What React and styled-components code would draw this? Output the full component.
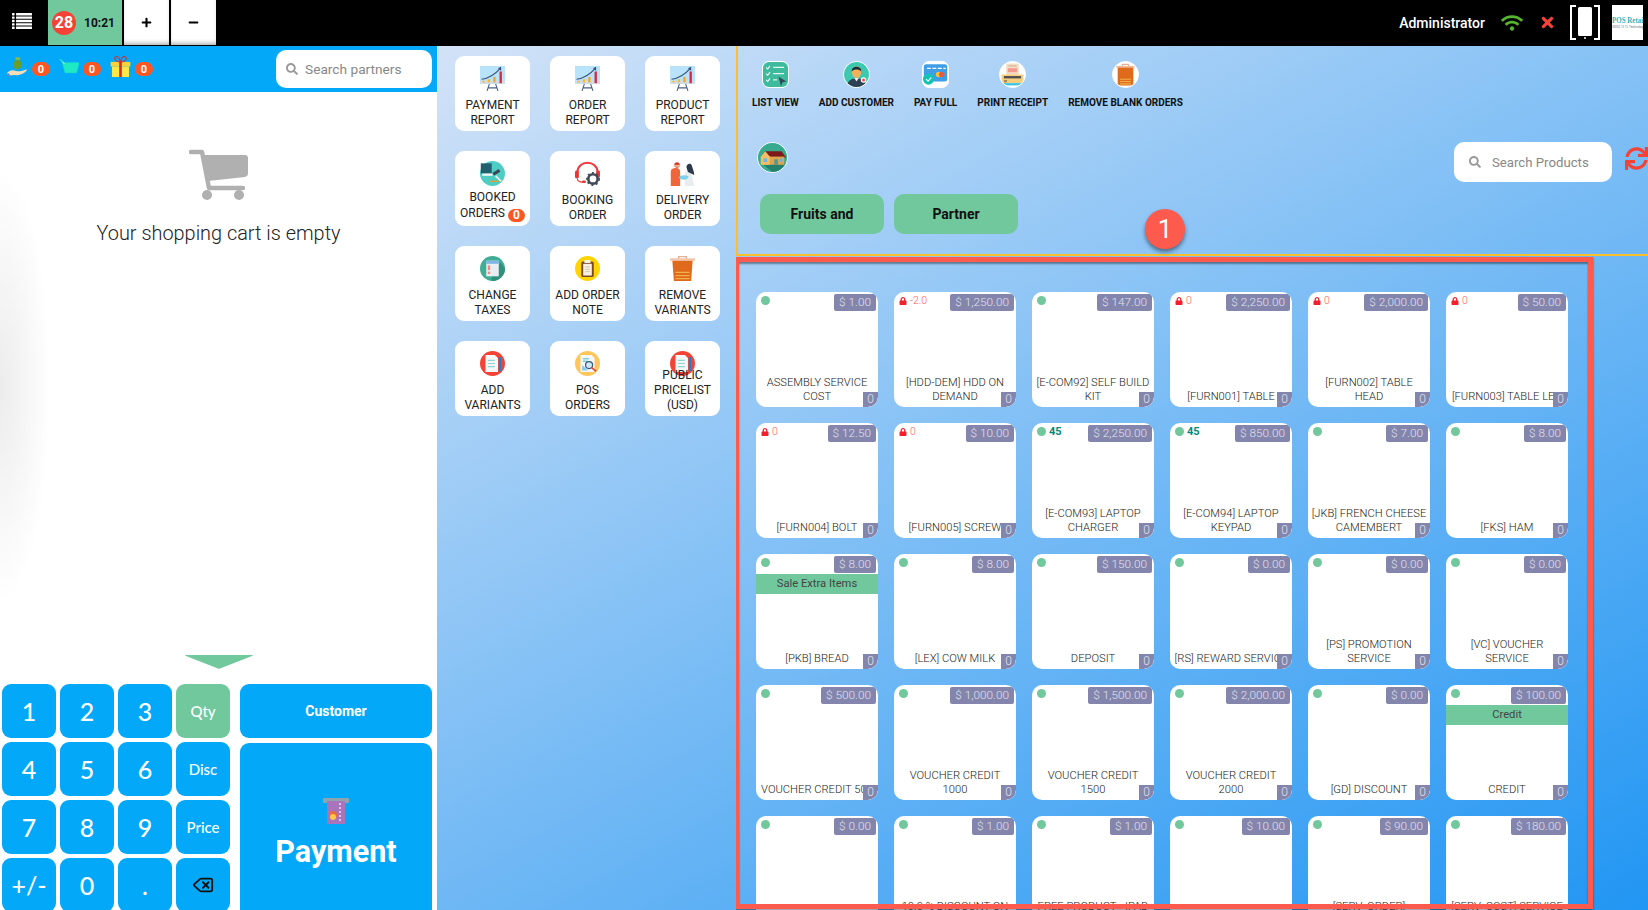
import React from "react";
import styled, { createGlobalStyle } from "styled-components";
import { FaWifi, FaTimes, FaSearch, FaSync, FaLock, FaPlus, FaMinus } from "react-icons/fa";
import { Delete } from "lucide-react";

const GlobalStyle = createGlobalStyle`
  html, body {
    margin: 0;
    padding: 0;
    height: 100%;
    overflow: hidden;
    font-family: Roboto, "Liberation Sans", sans-serif;
  }
  * { box-sizing: border-box; }
`;

// small drawings used around the page
const MenuIcon = () => (
  <svg viewBox="0 0 20 16" width="20" height="16" fill="#fff">
    {[0, 3.4, 6.8, 10.2, 13.6].map((y) => (
      <g key={y}>
        <rect x="0" y={y} width="2.6" height="2.4" rx="0.6" />
        <rect x="4" y={y} width="16" height="2.4" rx="0.4" />
      </g>
    ))}
  </svg>
);

const ChartIcon = () => (
  <svg viewBox="0 0 32 32" width="25" height="25">
    <rect x="0" y="0" width="32" height="23" fill="#b9e3fb" />
    <rect x="0" y="19" width="32" height="4" fill="#cfdde8" />
    <rect x="3" y="19" width="3" height="2" fill="#f5b82e" />
    <rect x="10" y="17" width="3" height="4" fill="#f5b82e" />
    <rect x="17" y="14" width="3" height="7" fill="#f5a623" />
    <rect x="25" y="7" width="3" height="15" fill="#d8283c" />
    <path d="M2 17 C10 16 18 12 26 3" fill="none" stroke="#34517a" strokeWidth="1.4" />
    <path d="M23 3 L27 1 L27 6 Z" fill="#34517a" />
    <path d="M12 23 L9 32 M20 23 L23 32 M10 28 H22" stroke="#4a5f80" strokeWidth="1.3" fill="none" />
  </svg>
);

const BookedIcon = () => (
  <svg viewBox="0 0 32 32" width="25" height="25">
    <circle cx="16" cy="16" r="16" fill="#4ecdc4" />
    <rect x="1" y="3" width="14" height="13" fill="#1f5f6e" />
    <rect x="3" y="16" width="13" height="3" fill="#f4f4f4" />
    <path d="M17 17 L25 12" stroke="#3a4654" strokeWidth="4" />
    <path d="M20 19 L27 26" stroke="#f4f4f4" strokeWidth="2" />
    <rect x="12" y="25" width="12" height="2" fill="#c9a94c" />
  </svg>
);

const HeadsetIcon = () => (
  <svg viewBox="0 0 32 32" width="25" height="25">
    <path d="M3 15 C3 -2 29 -2 29 15" fill="none" stroke="#f0393c" strokeWidth="2.6" />
    <rect x="0" y="12" width="5" height="10" rx="2" fill="#e53935" />
    <rect x="27" y="12" width="5" height="9" rx="2" fill="#e53935" />
    <path d="M3 22 C3 26 6 27 10 27" fill="none" stroke="#f0393c" strokeWidth="1.5" />
    <rect x="9" y="25" width="5" height="3" rx="1.5" fill="#e53935" />
    <circle cx="23" cy="23" r="6" fill="none" stroke="#3f4a57" strokeWidth="3.4" />
    <circle cx="23" cy="23" r="8" fill="none" stroke="#3f4a57" strokeWidth="1.8" strokeDasharray="2.5 3.4" />
  </svg>
);

const DeliveryIcon = () => (
  <svg viewBox="0 0 32 32" width="25" height="25">
    <path d="M1 32 V14 C1 10 4 9 8 9 C11 9 13 11 13 14 V32 Z" fill="#f0653a" />
    <circle cx="9" cy="5" r="3.5" fill="#d8362b" />
    <rect x="5" y="5" width="8" height="2.5" fill="#f2b48a" />
    <path d="M19 32 V16 C19 11 24 11 27 13 L31 32 Z" fill="#e9edf0" />
    <path d="M21 8 C21 3 27 2 28 6 C29 10 31 13 31 18 L27 16 L23 14 Z" fill="#2d3a4a" />
    <path d="M11 21 C13 18 20 17 24 20 C22 25 15 25 11 21 Z" fill="#7fd0e8" />
  </svg>
);

const TaxIcon = () => (
  <svg viewBox="0 0 32 32" width="25" height="25">
    <circle cx="16" cy="16" r="16" fill="#3fae95" />
    <path d="M14 30 L26 8 L32 16 A16 16 0 0 1 16 32 Z" fill="#2f917b" />
    <rect x="8" y="6" width="16" height="20" fill="#e8eef2" />
    <rect x="8" y="6" width="16" height="4" fill="#7fb6e6" />
    <rect x="10" y="12" width="3" height="6" fill="#f08a80" />
    <rect x="10" y="20" width="3" height="3" fill="#f08a80" />
  </svg>
);

const NoteIcon = () => (
  <svg viewBox="0 0 32 32" width="25" height="25">
    <circle cx="16" cy="16" r="16" fill="#ffd400" />
    <rect x="8" y="7" width="16" height="20" rx="2" fill="#7a4a22" />
    <rect x="10.5" y="10" width="11" height="15" fill="#f7f1e3" />
    <rect x="12" y="5" width="8" height="4" rx="1" fill="#f7f1e3" />
    <path d="M13 14 H19 M13 17 H19 M13 20 H19" stroke="#c9b89c" strokeWidth="1" />
  </svg>
);

const TrashIcon = () => (
  <svg viewBox="0 0 32 32" width="25" height="25">
    <rect x="0" y="3" width="32" height="3" fill="#f3c3a6" />
    <path d="M11 3 V1 H21 V3" fill="none" stroke="#d99b77" strokeWidth="1.5" />
    <path d="M3 6 H29 L27 32 H5 Z" fill="#e06a1c" />
    <path d="M7 21 H25 M7 25 H25 M7 29 H25" stroke="#f2b04a" strokeWidth="1.6" />
  </svg>
);

const VariantIcon = () => (
  <svg viewBox="0 0 32 32" width="25" height="25">
    <circle cx="16" cy="16" r="16" fill="#f44336" />
    <path d="M7 5 H19 L23 9 V27 H7 Z" fill="#f4f6f8" />
    <path d="M10 12 H19 M10 16 H19 M10 20 H19" stroke="#8fd6cf" strokeWidth="1.5" />
    <rect x="24" y="8" width="3" height="18" fill="#1f7fc4" />
  </svg>
);

const PosOrdersIcon = () => (
  <svg viewBox="0 0 32 32" width="25" height="25">
    <circle cx="16" cy="16" r="16" fill="#ffc65c" />
    <path d="M7 5 H21 L25 9 V27 H7 Z" fill="#f4f8fa" />
    <path d="M10 10 H18 M10 13 H16" stroke="#7fd0cf" strokeWidth="2" />
    <path d="M9 25 L9 18 L17 25 Z" fill="#8cc8ee" />
    <circle cx="18" cy="18" r="4.5" fill="#cfe8f7" stroke="#35567a" strokeWidth="1.5" />
    <path d="M21 21 L27 26" stroke="#e5483c" strokeWidth="2.2" />
  </svg>
);

const ListViewIcon = () => (
  <svg viewBox="0 0 32 32" width="100%" height="100%">
    <rect width="32" height="32" fill="#3dbb9c" />
    <path d="M4 7 L6 9 L9 5 M4 15 L6 17 L9 13 M4 23 L6 25 L9 21" fill="none" stroke="#fff" strokeWidth="1.3" />
    <path d="M13 7 H27 M13 15 H27 M13 23 H18" stroke="#e4f5f0" strokeWidth="1.6" />
    <path d="M20 19 L30 25 L25 26 L23 31 Z" fill="#37475a" />
  </svg>
);

const CustomerIcon = () => (
  <svg viewBox="0 0 32 32" width="100%" height="100%">
    <rect width="32" height="32" fill="#3dc9b0" />
    <path d="M4 32 C4 23 10 21 16 21 C22 21 28 23 28 32 Z" fill="#2e4054" />
    <path d="M13 20 H19 L16 25 Z" fill="#f4f4f4" />
    <ellipse cx="16" cy="13" rx="6" ry="7.5" fill="#f2b25c" />
    <path d="M10 12 C9 4 23 4 22 12 C19 9 13 9 10 12 Z" fill="#1d2b3a" />
    <circle cx="25" cy="23" r="3.5" fill="#fff" />
    <circle cx="25" cy="23" r="2" fill="#f0544f" />
  </svg>
);

const PayFullIcon = () => (
  <svg viewBox="0 0 32 32" width="100%" height="100%">
    <rect width="32" height="32" fill="#fff" />
    <rect x="1" y="3" width="30" height="22" rx="3" fill="#3f9fe6" />
    <path d="M5 8 H10 M12 8 H17 M19 8 H24 M26 8 H29" stroke="#fff" strokeWidth="1.6" />
    <circle cx="20" cy="16" r="3.5" fill="#f5c23c" />
    <circle cx="24" cy="16" r="3.5" fill="#ea5a3c" />
    <circle cx="7" cy="22" r="7" fill="#10c4b4" />
    <path d="M4 22 L6.5 24.5 L10.5 20" fill="none" stroke="#fff" strokeWidth="1.5" />
  </svg>
);

const ReceiptIcon = () => (
  <svg viewBox="0 0 32 32" width="100%" height="100%">
    <rect width="32" height="32" fill="#fff" />
    <rect x="8" y="2" width="16" height="15" fill="#f4dcc4" />
    <path d="M11 5 H21" stroke="#c9ad92" strokeWidth="1.2" />
    <rect x="10" y="8" width="12" height="5" fill="#f39a8c" />
    <path d="M2 16 H30 V27 H2 Z" fill="#f7cf7c" />
    <rect x="5" y="18" width="22" height="3" fill="#4d4f55" />
    <rect x="5" y="23" width="4" height="3" fill="#a98a58" />
    <rect x="5" y="27" width="22" height="3" fill="#3fc4e6" />
  </svg>
);

const RemoveIcon = () => (
  <svg viewBox="0 0 32 32" width="100%" height="100%">
    <rect width="32" height="32" fill="#fff" />
    <rect x="4" y="5" width="24" height="2" fill="#f3b795" />
    <path d="M12 5 V3 H20 V5" fill="none" stroke="#d99b77" strokeWidth="1.2" />
    <path d="M6 7 H26 V30 H6 Z" fill="#e06a1c" />
    <path d="M9 22 H23 M9 25 H23 M9 28 H23" stroke="#f2b04a" strokeWidth="1.3" />
  </svg>
);

const HomeIcon = () => (
  <svg viewBox="0 0 32 32" width="29" height="29">
    <circle cx="16" cy="16" r="16" fill="#38ab8f" />
    <path d="M6 24 L16 32 A16 16 0 0 0 30 23 L26 22 Z" fill="#26806e" />
    <path d="M3 15 L8 9 L26 9 L31 16 Z" fill="#7d1a1a" />
    <rect x="4" y="15" width="25" height="9" fill="#dfa54c" />
    <path d="M3 15 L8 9 L13 15 V24 H3 Z" fill="#f2bf68" />
    <rect x="6" y="17" width="4" height="4" fill="#6db6e8" />
    <rect x="18" y="18" width="4" height="6" fill="#4d9b94" />
    <rect x="24" y="17" width="3" height="4" fill="#6db6e8" />
  </svg>
);

const MoneyIcon = () => (
  <svg viewBox="0 0 32 32" width="21" height="21">
    <path d="M15 6 C7 9 8 20 15 20 C24 20 25 9 18 6 Z" fill="#6a9e2a" />
    <rect x="13" y="2" width="7" height="4" fill="#8cbc3c" />
    <path d="M0 26 C6 20 10 22 14 23 C20 24 24 22 31 20 C28 26 20 30 10 29 L2 30 Z" fill="#fbdcb8" />
    <path d="M1 27 L5 32" stroke="#4f8fd0" strokeWidth="3" />
  </svg>
);

const BasketIcon = () => (
  <svg viewBox="0 0 32 24" width="20" height="15">
    <path d="M0 1 H4 L8 6 H32 L28 22 H10 L5 4" fill="#1de9c4" stroke="#1de9c4" strokeWidth="1" />
    <path d="M5 4 L9 8" stroke="#fff" strokeWidth="1" />
  </svg>
);

const GiftIcon = () => (
  <svg viewBox="0 0 32 32" width="21" height="21">
    <rect x="1" y="9" width="30" height="7" fill="#f7d33a" />
    <rect x="3" y="16" width="26" height="16" fill="#fbe84a" />
    <rect x="14" y="9" width="4" height="23" fill="#d92a2a" />
    <path d="M16 9 C8 10 5 2 9 1 C13 0 15 5 16 9 C17 5 19 0 23 1 C27 2 24 10 16 9 Z" fill="none" stroke="#d92a2a" strokeWidth="1.6" />
  </svg>
);

const CartIcon = () => (
  <svg viewBox="0 0 60 52" width="60" height="52">
    <path d="M2 3 H13 L20 39 H54" fill="none" stroke="#b0b0b0" strokeWidth="4.4" strokeLinecap="round" strokeLinejoin="round" />
    <path d="M14 6 H56 Q59 6 59 9 V25 Q59 27 56 28 L19 32 Z" fill="#b0b0b0" />
    <circle cx="18" cy="46" r="5" fill="#b0b0b0" />
    <circle cx="50" cy="46" r="5" fill="#b0b0b0" />
  </svg>
);

const PaymentIcon = () => (
  <svg viewBox="0 0 26 26" width="26" height="26">
    <rect x="0" y="0" width="26" height="5" rx="1" fill="#90a4ae" />
    <rect x="4" y="3" width="18" height="23" fill="#a875bd" />
    <path d="M17 5 V25" stroke="#f0e4f5" strokeWidth="1.4" strokeDasharray="2 2" />
    <circle cx="10" cy="17" r="4" fill="#ef6a3c" />
    <circle cx="10" cy="19" r="3" fill="#fcc64a" />
  </svg>
);

const PhoneIcon = () => (
  <svg viewBox="0 0 30 35" width="30" height="35">
    <path d="M6 1 H1 V34 H6 M24 1 H29 V34 H24" fill="none" stroke="#fff" strokeWidth="2" />
    <rect x="8" y="2" width="14" height="29" rx="1.5" fill="#fff" />
    <circle cx="15" cy="33" r="1" fill="#fff" />
  </svg>
);

// data
const tiles = [
  { key: "pay", icon: <ChartIcon />, label: "PAYMENT REPORT" },
  { key: "ord", icon: <ChartIcon />, label: "ORDER REPORT" },
  { key: "prod", icon: <ChartIcon />, label: "PRODUCT REPORT" },
  { key: "booked", icon: <BookedIcon />, label: "BOOKED ORDERS", count: 0 },
  { key: "booking", icon: <HeadsetIcon />, label: "BOOKING ORDER" },
  { key: "delivery", icon: <DeliveryIcon />, label: "DELIVERY ORDER" },
  { key: "tax", icon: <TaxIcon />, label: "CHANGE TAXES" },
  { key: "note", icon: <NoteIcon />, label: "ADD ORDER NOTE" },
  { key: "rm", icon: <TrashIcon />, label: "REMOVE VARIANTS" },
  { key: "add", icon: <VariantIcon />, label: "ADD VARIANTS" },
  { key: "pos", icon: <PosOrdersIcon />, label: "POS ORDERS" },
  { key: "price", icon: <VariantIcon />, label: "PUBLIC PRICELIST (USD)" },
];

const tools = [
  { label: "LIST VIEW", icon: <ListViewIcon /> },
  { label: "ADD CUSTOMER", icon: <CustomerIcon />, round: true },
  { label: "PAY FULL", icon: <PayFullIcon /> },
  { label: "PRINT RECEIPT", icon: <ReceiptIcon />, round: true },
  { label: "REMOVE BLANK ORDERS", icon: <RemoveIcon />, round: true },
];

const products = [
  { name: "ASSEMBLY SERVICE COST", price: "1.00" },
  { name: "[HDD-DEM] HDD ON DEMAND", price: "1,250.00", locked: "-2.0" },
  { name: "[E-COM92] SELF BUILD KIT", price: "147.00" },
  { name: "[FURN001] TABLE", price: "2,250.00", locked: "0" },
  { name: "[FURN002] TABLE HEAD", price: "2,000.00", locked: "0" },
  { name: "[FURN003] TABLE LEG", price: "50.00", locked: "0", single: true },
  { name: "[FURN004] BOLT", price: "12.50", locked: "0" },
  { name: "[FURN005] SCREW", price: "10.00", locked: "0" },
  { name: "[E-COM93] LAPTOP CHARGER", price: "2,250.00", stock: "45" },
  { name: "[E-COM94] LAPTOP KEYPAD", price: "850.00", stock: "45" },
  { name: "[JKB] FRENCH CHEESE CAMEMBERT", price: "7.00" },
  { name: "[FKS] HAM", price: "8.00" },
  { name: "[PKB] BREAD", price: "8.00", extra: "Sale Extra Items" },
  { name: "[LEX] COW MILK", price: "8.00" },
  { name: "DEPOSIT", price: "150.00" },
  { name: "[RS] REWARD SERVICE", price: "0.00", single: true },
  { name: "[PS] PROMOTION SERVICE", price: "0.00" },
  { name: "[VC] VOUCHER SERVICE", price: "0.00" },
  { name: "VOUCHER CREDIT 500", price: "500.00", single: true },
  { name: "VOUCHER CREDIT 1000", price: "1,000.00" },
  { name: "VOUCHER CREDIT 1500", price: "1,500.00" },
  { name: "VOUCHER CREDIT 2000", price: "2,000.00" },
  { name: "[GD] DISCOUNT", price: "0.00" },
  { name: "CREDIT", price: "100.00", extra: "Credit" },
  { name: "TIPS", price: "0.00" },
  { name: "10.0 % DISCOUNT ON PRODUCTS", price: "1.00" },
  { name: "FREE PRODUCT - IPAD MINI", price: "1.00" },
  { name: "SHIPPING", price: "10.00" },
  { name: "[SERV_ORDER] PREPAID HOURS", price: "90.00" },
  { name: "[SERV_COST] SERVICE HOURS", price: "180.00" },
];

const padKeys = [
  { label: "1" }, { label: "2" }, { label: "3" }, { label: "Qty", mode: true, active: true },
  { label: "4" }, { label: "5" }, { label: "6" }, { label: "Disc", mode: true },
  { label: "7" }, { label: "8" }, { label: "9" }, { label: "Price", mode: true },
  { label: "+/-" }, { label: "0" }, { label: "." }, { label: <Delete size={22} color="#111" strokeWidth={2} />, mode: true },
];

export default function App() {
  return (
    <Page>
      <GlobalStyle />
      <TopBar>
        <MenuBtn><MenuIcon /></MenuBtn>
        <Ticket>
          <TicketNo>28</TicketNo>
          <TicketTime>10:21</TicketTime>
        </Ticket>
        <SquareBtn><FaPlus size={11} /></SquareBtn>
        <SquareBtn><FaMinus size={11} /></SquareBtn>
        <TopRight>
          <UserName>Administrator</UserName>
          <FaWifi size={22} color="#55b52c" />
          <CloseIcon size={17} color="#f44336" />
          <PhoneWrap><PhoneIcon /></PhoneWrap>
          <LogoBox>
            <LogoName>POS Retail</LogoName>
            <LogoSub>ODOO 13 TL Technology</LogoSub>
          </LogoBox>
        </TopRight>
      </TopBar>

      <Main>
        <LeftPanel>
          <LeftHeader>
            <Counter><MoneyIcon /><Count>0</Count></Counter>
            <Counter><BasketIcon /><Count>0</Count></Counter>
            <Counter><GiftIcon /><Count>0</Count></Counter>
            <PartnerSearch>
              <FaSearch size={12} color="#9a9a9a" />
              <span>Search partners</span>
            </PartnerSearch>
          </LeftHeader>
          <CartArea>
            <CartIcon />
            <CartText>Your shopping cart is empty</CartText>
          </CartArea>
          <Arrow viewBox="0 0 70 14" width="70" height="14">
            <path d="M2 0 H68 Q70 0 68 1 L36 13.5 Q35 14 34 13.5 L2 1 Q0 0 2 0 Z" fill="#70c89c" />
          </Arrow>
          <PadRow>
            <NumPad>
              {padKeys.map((k, i) => (
                <PadKey key={i} $mode={k.mode} $active={k.active}>{k.label}</PadKey>
              ))}
            </NumPad>
            <PadSide>
              <CustomerBtn>Customer</CustomerBtn>
              <PaymentBtn>
                <PaymentIcon />
                <span>Payment</span>
              </PaymentBtn>
            </PadSide>
          </PadRow>
        </LeftPanel>

        <ActionPanel>
          {tiles.map((t) => (
            <Tile key={t.key} $tall={t.count !== undefined}>
              <TileIcon>{t.icon}</TileIcon>
              <TileLabel>
                {t.label}
                {t.count !== undefined && <TileCount>{t.count}</TileCount>}
              </TileLabel>
            </Tile>
          ))}
        </ActionPanel>

        <RightPanel>
          <ControlArea>
            <Tools>
              {tools.map((t) => (
                <Tool key={t.label}>
                  <ToolIcon $round={t.round}>{t.icon}</ToolIcon>
                  <ToolLabel>{t.label}</ToolLabel>
                </Tool>
              ))}
            </Tools>
            <SearchRow>
              <HomeBtn><HomeIcon /></HomeBtn>
              <ProductSearch>
                <FaSearch size={12} color="#9a9a9a" />
                <span>Search Products</span>
              </ProductSearch>
              <RefreshIcon size={23} color="#f44336" />
            </SearchRow>
            <Categories>
              <CategoryBtn>Fruits and</CategoryBtn>
              <CategoryBtn>Partner</CategoryBtn>
            </Categories>
            <StepBadge>1</StepBadge>
          </ControlArea>

          <ProductArea>
            <ProductFrame />
            <ProductGrid>
              {products.map((p) => (
                <Card key={p.name}>
                  <CardStatus>
                    {p.locked !== undefined ? (
                      <>
                        <FaLock size={8} color="#f21f2c" />
                        <LockedQty>{p.locked}</LockedQty>
                      </>
                    ) : (
                      <>
                        <Dot />
                        {p.stock && <StockQty>{p.stock}</StockQty>}
                      </>
                    )}
                  </CardStatus>
                  <Price>$ {p.price}</Price>
                  {p.extra && <Extra>{p.extra}</Extra>}
                  <CardName $single={p.single}>{p.name}</CardName>
                  <CardQty>0</CardQty>
                </Card>
              ))}
            </ProductGrid>
          </ProductArea>
        </RightPanel>
      </Main>
    </Page>
  );
}

const Page = styled.div`
  width: 1648px;
  height: 910px;
  display: flex;
  flex-direction: column;
  overflow: hidden;
  background: linear-gradient(to bottom right, #f4f1f8, #2196f3);
`;

const TopBar = styled.header`
  height: 46px;
  flex: none;
  display: flex;
  align-items: flex-start;
  background: #000;
`;

const MenuBtn = styled.div`
  width: 48px;
  height: 42px;
  display: flex;
  align-items: center;
  justify-content: center;
  padding-right: 4px;
`;

const Ticket = styled.div`
  width: 74px;
  height: 45px;
  margin-right: 2px;
  display: flex;
  align-items: center;
  padding-left: 4px;
  background: #70c89c;
`;

const TicketNo = styled.span`
  width: 24px;
  height: 24px;
  border-radius: 50%;
  display: flex;
  align-items: center;
  justify-content: center;
  background: #f44336;
  color: #fff;
  font-size: 16px;
  font-weight: 700;
`;

const TicketTime = styled.span`
  margin-left: 8px;
  font-size: 12px;
  font-weight: 700;
  color: #111;
`;

const SquareBtn = styled.div`
  width: 45px;
  height: 45px;
  margin-right: 2px;
  display: flex;
  align-items: center;
  justify-content: center;
  background: #fff;
  color: #000;
  box-shadow: inset 0 -4px 4px -2px rgba(0, 0, 0, 0.3);
`;

const TopRight = styled.div`
  margin-left: auto;
  height: 45px;
  display: flex;
  align-items: center;
  padding-right: 5px;
`;

const UserName = styled.span`
  margin-right: 16px;
  color: #fff;
  font-size: 14px;
  font-weight: 500;
`;

const CloseIcon = styled(FaTimes)`
  margin-left: 16px;
`;

const PhoneWrap = styled.div`
  margin-left: 14px;
  display: flex;
`;

const LogoBox = styled.div`
  width: 31px;
  height: 35px;
  margin-left: 12px;
  overflow: hidden;
  background: #fff;
  display: flex;
  flex-direction: column;
  justify-content: center;
  white-space: nowrap;
`;

const LogoName = styled.span`
  font-size: 8.5px;
  line-height: 10px;
  color: #35b4b8;
  font-family: "Liberation Serif", serif;
  font-weight: 700;
  transform: scaleX(0.82);
  transform-origin: left center;
`;

const LogoSub = styled.span`
  font-size: 3px;
  line-height: 5px;
  color: #777;
`;

const Main = styled.div`
  flex: 1;
  min-height: 0;
  display: flex;
`;

const LeftPanel = styled.section`
  width: 437px;
  flex: none;
  display: flex;
  flex-direction: column;
  background: #fff;
`;

const LeftHeader = styled.div`
  height: 46px;
  flex: none;
  display: flex;
  align-items: center;
  padding: 0 5px 0 7px;
  background: #03a9f8;
`;

const Counter = styled.div`
  display: flex;
  align-items: center;
  margin-right: 9px;
  svg {
    margin-bottom: 6px;
  }
`;

const Count = styled.span`
  width: 18px;
  height: 14px;
  margin-left: 4px;
  border-radius: 7px;
  display: flex;
  align-items: center;
  justify-content: center;
  background: #ff5722;
  color: #fff;
  font-size: 11px;
  font-weight: 700;
`;

const SearchBox = styled.div`
  height: 38px;
  display: flex;
  align-items: center;
  border-radius: 10px;
  background: #fff;
  color: #888;
`;

const PartnerSearch = styled(SearchBox)`
  width: 156px;
  margin-left: auto;
  padding-left: 10px;
  gap: 7px;
  font-size: 13.7px;
`;

const CartArea = styled.div`
  flex: 1;
  position: relative;
  display: flex;
  flex-direction: column;
  align-items: center;
  padding-top: 57px;
  &::before {
    content: "";
    position: absolute;
    left: -50px;
    top: 80px;
    width: 100px;
    height: 430px;
    background: radial-gradient(ellipse at center, #ececec 0%, rgba(255, 255, 255, 0) 72%);
  }
`;

const CartText = styled.p`
  margin: 20px 0 0;
  font-size: 19.9px;
  font-weight: 300;
  line-height: 26px;
  color: #222;
`;

const Arrow = styled.svg`
  display: block;
  flex: none;
  align-self: center;
  margin-bottom: 15px;
`;

const PadRow = styled.div`
  height: 226px;
  flex: none;
  display: flex;
  padding-left: 2px;
`;

const NumPad = styled.div`
  width: 228px;
  height: 228px;
  display: grid;
  grid-template-columns: repeat(4, 54px);
  grid-template-rows: repeat(4, 54px);
  gap: 4px;
`;

const PadKey = styled.div`
  display: flex;
  align-items: center;
  justify-content: center;
  border-radius: 9px;
  background: ${(p) => (p.$active ? "#70c89c" : "#03a9f8")};
  color: #fff;
  font-family: Lato, sans-serif;
  font-size: ${(p) => (p.$mode ? "15px" : "25px")};
  font-weight: 500;
`;

const PadSide = styled.div`
  width: 192px;
  margin-left: 10px;
  display: flex;
  flex-direction: column;
  gap: 5px;
`;

const CustomerBtn = styled.div`
  height: 54px;
  flex: none;
  display: flex;
  align-items: center;
  justify-content: center;
  border-radius: 9px;
  background: #03a9f8;
  color: #fff;
  font-size: 14px;
  font-weight: 700;
`;

const PaymentBtn = styled.div`
  height: 180px;
  flex: none;
  display: flex;
  flex-direction: column;
  align-items: center;
  padding-top: 55px;
  border-radius: 9px;
  background: #03a9f8;
  color: #fff;
  font-size: 30.5px;
  font-weight: 700;
  span {
    margin-top: 10px;
  }
`;

const ActionPanel = styled.section`
  width: 300px;
  flex: none;
  align-self: flex-start;
  padding: 10px 17px 0 18px;
  display: grid;
  grid-template-columns: repeat(3, 75px);
  grid-auto-rows: 75px;
  gap: 20px;
`;

const Tile = styled.div`
  position: relative;
  display: flex;
  flex-direction: column;
  justify-content: flex-end;
  padding: 0 3px ${(p) => (p.$tall ? "3px" : "3px")};
  border-radius: 9px;
  background: #fff;
`;

const TileIcon = styled.div`
  position: absolute;
  top: 10px;
  left: 25px;
  width: 25px;
  height: 25px;
`;

const TileLabel = styled.div`
  position: relative;
  text-align: center;
  font-size: 12px;
  line-height: 15px;
  color: #222;
`;

const TileCount = styled.span`
  display: inline-block;
  width: 17px;
  height: 13px;
  margin: 4px 0 1px 3px;
  vertical-align: middle;
  border-radius: 7px;
  background: #ff5722;
  color: #fff;
  font-size: 12px;
  font-weight: 700;
  line-height: 13px;
`;

const RightPanel = styled.section`
  flex: 1;
  min-width: 0;
  display: flex;
  flex-direction: column;
`;

const ControlArea = styled.div`
  position: relative;
  height: 210px;
  flex: none;
  border-left: 2px solid #f9c02c;
  border-bottom: 2px solid #f9c02c;
  margin-left: -1px;
`;

const Tools = styled.div`
  display: flex;
  gap: 20px;
  padding: 15px 0 0 14px;
`;

const Tool = styled.div`
  display: flex;
  flex-direction: column;
  align-items: center;
`;

const ToolIcon = styled.div`
  width: 27px;
  height: 27px;
  overflow: hidden;
  border: 1px solid #fff;
  border-radius: ${(p) => (p.$round ? "50%" : "7px")};
  background: #fff;
`;

const ToolLabel = styled.div`
  margin-top: 8px;
  font-size: 10px;
  font-weight: 700;
  line-height: 13px;
  color: #111;
  white-space: nowrap;
`;

const SearchRow = styled.div`
  display: flex;
  align-items: center;
  margin-top: 33px;
  padding-left: 19px;
`;

const HomeBtn = styled.div`
  width: 31px;
  height: 31px;
  display: flex;
  align-items: center;
  justify-content: center;
  border: 1px solid #fff;
  border-radius: 50%;
  margin-bottom: 9px;
`;

const ProductSearch = styled(SearchBox)`
  width: 158px;
  height: 40px;
  margin-left: auto;
  margin-right: 13px;
  padding-left: 15px;
  gap: 11px;
  font-size: 13.2px;
`;

const RefreshIcon = styled(FaSync)`
  margin-bottom: 8px;
`;

const Categories = styled.div`
  display: flex;
  gap: 10px;
  margin-top: 12px;
  padding-left: 22px;
`;

const CategoryBtn = styled.div`
  width: 124px;
  height: 40px;
  display: flex;
  align-items: center;
  justify-content: center;
  border-radius: 10px;
  background: #70c89c;
  color: #111;
  font-size: 14px;
  font-weight: 700;
`;

const StepBadge = styled.div`
  position: absolute;
  left: 407px;
  top: 163px;
  width: 40px;
  height: 40px;
  display: flex;
  align-items: center;
  justify-content: center;
  border-radius: 50%;
  background: #fe5a4d;
  color: #fff;
  font-size: 26px;
  font-weight: 400;
  box-shadow: 0 3px 4px rgba(0, 0, 0, 0.45);
`;

const ProductArea = styled.div`
  position: relative;
  flex: 1;
  min-height: 0;
  overflow: hidden;
  margin-left: -1px;
  padding: 36px 0 0 20px;
`;

const ProductFrame = styled.div`
  position: absolute;
  z-index: 2;
  left: -2px;
  top: 1px;
  width: 859px;
  height: 652px;
  border: 5px solid #fe5a4d;
  box-shadow: 0 1px 2px rgba(0, 0, 0, 0.5), inset 0 2px 2px rgba(0, 0, 0, 0.4);
  pointer-events: none;
`;

const ProductGrid = styled.div`
  display: grid;
  grid-template-columns: repeat(6, 122px);
  grid-auto-rows: 115px;
  gap: 16px;
`;

const Card = styled.div`
  position: relative;
  overflow: hidden;
  display: flex;
  flex-direction: column;
  justify-content: flex-end;
  padding: 0 3px 3px;
  border-radius: 10px;
  background: #fff;
`;

const CardStatus = styled.div`
  position: absolute;
  top: 4px;
  left: 5px;
  height: 9px;
  display: flex;
  align-items: center;
  gap: 3px;
  font-size: 11px;
`;

const Dot = styled.span`
  width: 9px;
  height: 9px;
  border-radius: 50%;
  background: #70c89c;
`;

const LockedQty = styled.span`
  color: #ff5a5f;
  font-size: 10.5px;
  font-weight: 300;
`;

const StockQty = styled.span`
  color: #00897b;
  font-weight: 700;
`;

const Price = styled.span`
  position: absolute;
  top: 2px;
  right: 2px;
  height: 17px;
  padding: 0 5px;
  border-radius: 2px;
  background: #8385ad;
  color: #e2e2ee;
  font-size: 11.8px;
  font-weight: 300;
  line-height: 17px;
`;

const Extra = styled.div`
  position: absolute;
  top: 20px;
  left: 0;
  right: 0;
  height: 20px;
  background: #70c89c;
  color: #444;
  font-size: 11.2px;
  line-height: 19px;
  text-align: center;
`;

const CardName = styled.div`
  text-align: center;
  font-size: 11.2px;
  font-weight: 300;
  line-height: 14px;
  color: #222;
  white-space: ${(p) => (p.$single ? "nowrap" : "normal")};
`;

const CardQty = styled.span`
  position: absolute;
  right: 0;
  bottom: 0;
  width: 15px;
  height: 15px;
  border-bottom-right-radius: 10px;
  background: #8385ad;
  color: #e2e2ee;
  font-size: 12px;
  font-weight: 300;
  line-height: 15px;
  text-align: center;
`;
